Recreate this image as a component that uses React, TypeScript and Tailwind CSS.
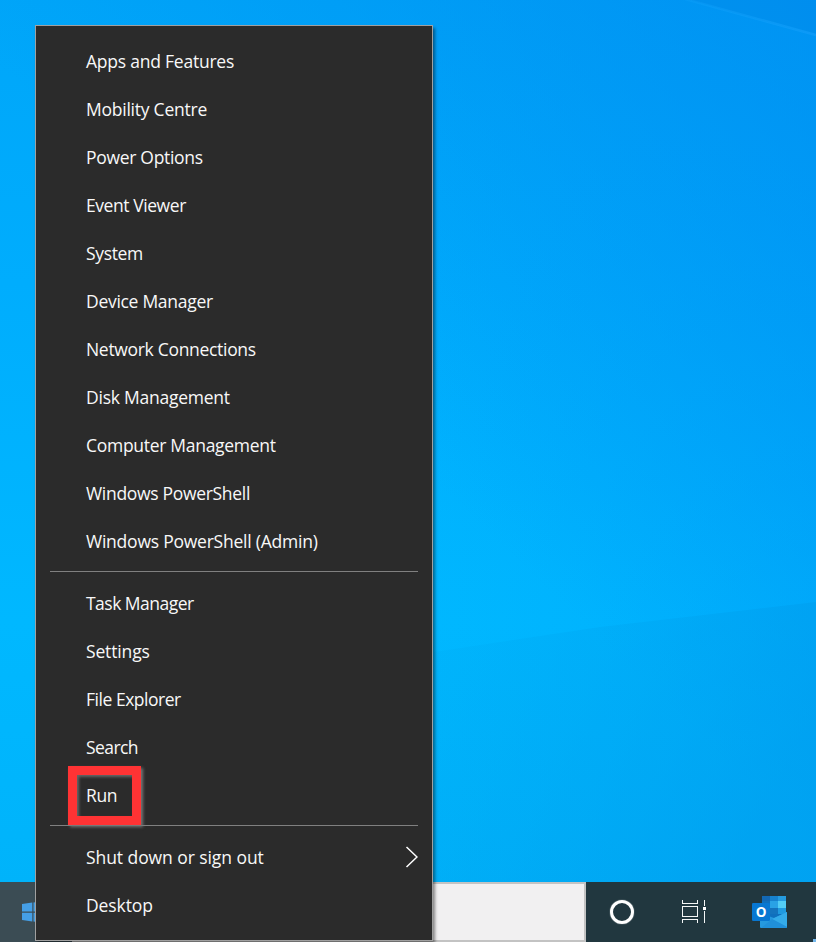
import React from "react";

type Item = { label: string; tracking: string; submenu?: boolean; marked?: boolean };

const groups: Item[][] = [
  [
    { label: "Apps and Features", tracking: "tracking-[-0.23px]" },
    { label: "Mobility Centre", tracking: "tracking-[-0.24px]" },
    { label: "Power Options", tracking: "tracking-[-0.3px]" },
    { label: "Event Viewer", tracking: "tracking-[-0.43px]" },
    { label: "System", tracking: "tracking-[-0.33px]" },
    { label: "Device Manager", tracking: "tracking-[-0.29px]" },
    { label: "Network Connections", tracking: "tracking-[-0.31px]" },
    { label: "Disk Management", tracking: "tracking-[-0.24px]" },
    { label: "Computer Management", tracking: "tracking-[-0.29px]" },
    { label: "Windows PowerShell", tracking: "tracking-[-0.31px]" },
    { label: "Windows PowerShell (Admin)", tracking: "tracking-[-0.23px]" },
  ],
  [
    { label: "Task Manager", tracking: "tracking-[-0.52px]" },
    { label: "Settings", tracking: "tracking-[-0.15px]" },
    { label: "File Explorer", tracking: "tracking-[-0.47px]" },
    { label: "Search", tracking: "tracking-[-0.58px]" },
    { label: "Run", tracking: "tracking-[-0.4px]", marked: true },
  ],
  [
    { label: "Shut down or sign out", tracking: "tracking-[-0.07px]", submenu: true },
    { label: "Desktop", tracking: "tracking-[-0.1px]" },
  ],
];

function Wallpaper() {
  return (
    <svg className="absolute inset-0" width="816" height="942" viewBox="0 0 816 942" aria-hidden="true">
      <defs>
        <linearGradient id="sky" x1="0" y1="0" x2="0" y2="1">
          <stop offset="0" stopColor="#00a6f9" />
          <stop offset="0.3" stopColor="#00adfd" />
          <stop offset="0.66" stopColor="#00b8ff" />
          <stop offset="1" stopColor="#00b2f9" />
        </linearGradient>
        <linearGradient id="edge" gradientUnits="userSpaceOnUse" x1="400" y1="450" x2="830" y2="0">
          <stop offset="0" stopColor="#0090f0" stopOpacity="0" />
          <stop offset="1" stopColor="#008cf0" stopOpacity="0.75" />
        </linearGradient>
        <linearGradient id="side" x1="0.5" y1="0" x2="1" y2="0">
          <stop offset="0" stopColor="#0094f4" stopOpacity="0" />
          <stop offset="1" stopColor="#0094f4" stopOpacity="0.25" />
        </linearGradient>
        <linearGradient id="floor" x1="0" y1="0" x2="1" y2="0.4">
          <stop offset="0" stopColor="#00a8f0" stopOpacity="0.15" />
          <stop offset="1" stopColor="#009aea" stopOpacity="0.5" />
        </linearGradient>
        <linearGradient id="ray" x1="0" y1="0" x2="1" y2="0">
          <stop offset="0" stopColor="#18a8ff" stopOpacity="0.2" />
          <stop offset="1" stopColor="#18a4ff" stopOpacity="0.5" />
        </linearGradient>
      </defs>
      <rect width="816" height="942" fill="url(#sky)" />
      <rect width="816" height="942" fill="url(#edge)" />
      <rect width="816" height="942" fill="url(#side)" />
      <path d="M690 0 L816 36 V0Z" fill="#0084e4" fillOpacity="0.3" />
      <path d="M685 -1 L816 35" stroke="url(#ray)" strokeWidth="2.5" />
      <path d="M434 652 L600 627 L816 602 V882 H434Z" fill="url(#floor)" />
    </svg>
  );
}

function WindowsLogo() {
  return (
    <svg width="22" height="22" viewBox="0 0 22 22" fill="#459fe6" aria-hidden="true">
      <path d="M0 3 L10.3 1.6 V10.5 H0Z M11.5 1.4 L22 0 V10.5 H11.5Z M0 11.7 H10.3 V20.4 L0 19Z M11.5 11.7 H22 V22 L11.5 20.6Z" />
    </svg>
  );
}

function TaskViewIcon() {
  return (
    <svg width="26" height="24" viewBox="0 0 26 24" fill="none" stroke="#f4f7f7" strokeWidth="1.1" shapeRendering="crispEdges" aria-hidden="true">
      <path d="M0.5 0 V3.5 H15.5 V0 M0.5 6.5 H15.5 V16.5 H0.5Z M0.5 23 V19.5 H15.5 V23 M22.5 0 V6 M22.5 11 V23" />
      <rect x="21" y="7" width="3" height="3" fill="#fff" stroke="none" />
    </svg>
  );
}

function OutlookIcon() {
  return (
    <svg width="35" height="32" viewBox="0 0 35 32" aria-hidden="true">
      <path d="M10 1 Q10 0 11 0 H33 Q34 0 34 1 V26 H10Z" fill="#0f6fbd" />
      <path d="M10 0 H18 V5 H10Z" fill="#1268b5" />
      <path d="M18 0 H26 V5 H18Z" fill="#1682ce" />
      <path d="M26 0 H34 V5 H26Z" fill="#259bdf" />
      <path d="M18 5 H26 V12 H18Z" fill="#29a2e5" />
      <path d="M26 5 H34 V12 H26Z" fill="#53cdf5" />
      <path d="M18 12 H26 V18 H18Z" fill="#1473bd" />
      <path d="M26 12 H34 V18 H26Z" fill="#209ae0" />
      <path d="M8 17 L22 22 L35 16 V31 Q35 32 34 32 H9 Q8 32 8 31Z" fill="#2599df" />
      <path d="M35 16 V31 L20 23Z" fill="#34abe9" />
      <path d="M9 32 L20 23 L35 31 Q35 32 34 32Z" fill="#2090da" />
      <rect x="0" y="7" width="18" height="18" rx="1.2" fill="#0877d2" />
      <text x="9" y="20.7" textAnchor="middle" fontFamily="Open Sans" fontWeight="700" fontSize="13.5" fill="#fff">
        O
      </text>
    </svg>
  );
}

function MenuItem({ label, tracking, submenu, marked }: Item) {
  return (
    <li className="relative flex h-12 items-center justify-between pr-[14px] pb-0.5 pl-[50px]">
      <span className={tracking}>{label}</span>
      {submenu && (
        <svg width="13" height="22" viewBox="0 0 13 22" fill="none" stroke="#fff" strokeWidth="1.5" aria-hidden="true">
          <path d="M1.5 1 L12 11 L1.5 21" />
        </svg>
      )}
      {marked && (
        <span className="absolute top-[-6px] left-8 h-[59px] w-[73px] border-[9px] border-[#ff3334] shadow-[2px_2px_3px_#777,inset_2px_2px_3px_#666]" />
      )}
    </li>
  );
}

export default function App() {
  return (
    <div className="relative flex h-[942px] w-[816px] flex-col justify-end overflow-hidden bg-[#00a8fb]">
      <Wallpaper />
      <footer className="relative flex h-[60px] bg-[#21373f]">
        <div className="flex w-[72px] items-center bg-[#3b4c54] pl-[22px]">
          <WindowsLogo />
        </div>
        <div className="w-[514px] border-2 border-[#c3c3c3] bg-[#f1f0f1]" />
        <div className="flex w-[72px] items-center justify-center">
          <span className="size-6 rounded-full border-[3px] border-white shadow-[0_0_1px_#fff]" />
        </div>
        <div className="flex w-[72px] items-center justify-center pl-0.5">
          <TaskViewIcon />
        </div>
        <div className="flex w-[78px] items-center justify-center">
          <OutlookIcon />
        </div>
        <span className="absolute right-0 bottom-0 h-[3px] w-[3px] bg-[#76b9ed]" />
      </footer>

      <nav className="absolute top-[25px] left-[35px] h-[916px] w-[398px] border border-[#a0a0a0] bg-[#2b2b2b] py-3 font-['Open_Sans','Noto_Sans',sans-serif] text-[17.5px] leading-6 whitespace-nowrap text-[#f8f8f8] shadow-[2px_3px_3px_rgba(0,0,0,0.45)]">
        {groups.map((group, i) => (
          <React.Fragment key={i}>
            {i > 0 && <div className="mx-[14px] mt-[5px] mb-2 h-px bg-[#808080]" />}
            <ul>
              {group.map((item) => (
                <MenuItem key={item.label} {...item} />
              ))}
            </ul>
          </React.Fragment>
        ))}
      </nav>
    </div>
  );
}
